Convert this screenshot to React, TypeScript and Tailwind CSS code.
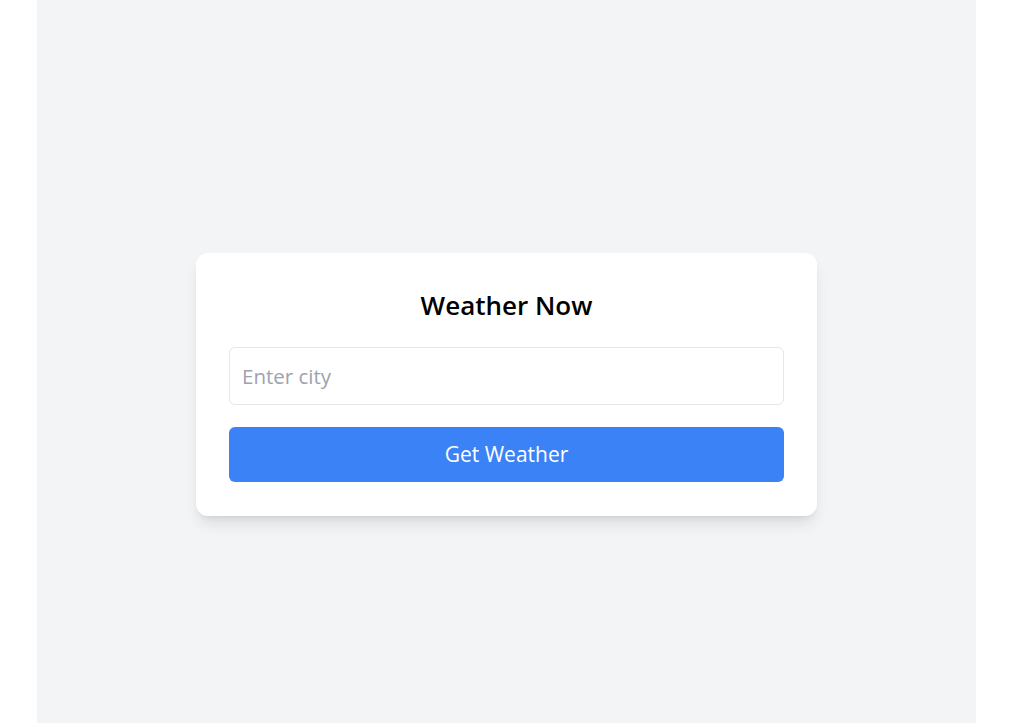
export default function App() {
  return (
    <div className="min-h-screen bg-white" style={{ fontFamily: '"Open Sans", "Noto Sans", sans-serif' }}>
      <div className="ml-[37px] flex min-h-[723px] w-[939px] flex-col items-center bg-[#f3f4f6] pt-[253px]">
        <div className="w-[621px] rounded-xl bg-white px-[33px] pt-[34px] pb-[34px] shadow-lg">
          <h1 className="text-center text-[26px] leading-[36px] font-semibold text-black">Weather Now</h1>
          <input
            type="text"
            placeholder="Enter city"
            className="mt-[24px] block h-[58px] w-full rounded-md border border-[#e5e7eb] px-3 text-[20.5px] text-gray-800 placeholder:text-[#9ca3af] focus:outline-none"
          />
          <button className="mt-[22px] block h-[55px] w-full rounded-md bg-[#3b82f6] text-[21px] text-white">
            Get Weather
          </button>
        </div>
      </div>
    </div>
  );
}
